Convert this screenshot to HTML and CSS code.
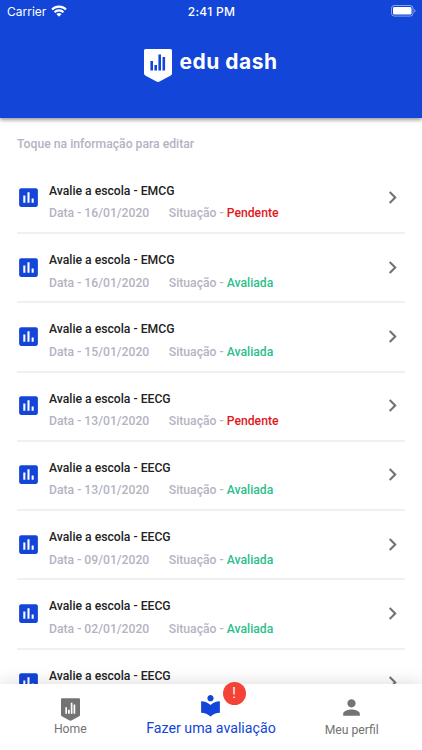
FILE: index.html
```
<!DOCTYPE html>
<html lang="pt-BR">
<head>
  <meta charset="UTF-8" />
  <meta name="viewport" content="width=device-width, initial-scale=1.0"/>
  <title>edu dash</title>
  <link rel="stylesheet" href="styles.css">
</head>
<body>

<header>
  <div class="status-bar">
    <span class="carrier">
      Carrier
      <svg class="wifi" viewBox="0 0 16 12">
        <path d="M1 4.500a10 10 0 0 1 14 0M3.500 7.200a6.400 6.400 0 0 1 9 0" fill="none" stroke="#fff" stroke-width="2.1"/>
        <path d="M5.400 9.100a3.800 3.800 0 0 1 5.200 0L8 11.700z" fill="#fff"/>
      </svg>
    </span>
    <span class="clock">2:41 PM</span>
    <svg class="battery" viewBox="0 0 25 12">
      <rect x=".5" y=".5" width="21.5" height="10.6" rx="2.8" fill="none" stroke="#fff" stroke-opacity=".5"/>
      <rect x="2" y="2" width="18.5" height="7.6" rx="1.4" fill="#fff"/>
      <path d="M23.3 4v3.800q1.200-.7 1.200-1.900T23.300 4z" fill="#fff" fill-opacity=".5"/>
    </svg>
  </div>
  <div class="logo">
    <svg class="logo-icon" viewBox="0 0 28 33">
      <path d="M1.500 0h25q1.500 0 1.500 1.500v23q0 1.200-1.200 1.900L16 32.300q-2 1.200-4 0L1.200 26.400Q0 25.700 0 24.500v-23Q0 0 1.500 0z" fill="#fff"/>
      <path d="M6.400 12H9v9.600H6.400zM10.400 16H13v5.600h-2.600zM14.400 5.500H17v16.100h-2.600zM18.500 8h2.600v13.600h-2.600z" fill="#1245d8"/>
    </svg>
    <span class="logo-text">edu dash</span>
  </div>
</header>

<main>
  <p class="hint">Toque na informação para editar</p>
  <ul id="evaluations">
    <!-- Evaluation rows inserted here -->
  </ul>
</main>

<nav>
  <a class="tab home">
    <svg viewBox="0 0 28 33">
      <path d="M1.500 0h25q1.500 0 1.500 1.500v23q0 1.200-1.200 1.900L16 32.300q-2 1.200-4 0L1.200 26.400Q0 25.700 0 24.500v-23Q0 0 1.500 0z" fill="#737373"/>
      <path d="M6.400 13h2.500v9.600H6.400zM10.400 17h2.500v5.600h-2.500zM14.400 6.500h2.500v16.100h-2.500zM18.500 9H21v13.600h-2.500z" fill="#fff"/>
    </svg>
    <span>Home</span>
  </a>
  <a class="tab active">
    <svg viewBox="0 0 24 24"><path d="M12 11.550C9.640 9.350 6.480 8 3 8v11c3.480 0 6.640 1.350 9 3.550 2.360-2.190 5.520-3.550 9-3.550V8c-3.480 0-6.640 1.350-9 3.550zM12 8c1.660 0 3-1.340 3-3s-1.340-3-3-3-3 1.340-3 3 1.340 3 3 3z"/></svg>
    <span>Fazer uma avaliação</span>
    <b class="badge">!</b>
  </a>
  <a class="tab profile">
    <svg viewBox="0 0 24 24"><path d="M12 12c2.210 0 4-1.790 4-4s-1.790-4-4-4-4 1.790-4 4 1.790 4 4 4zm0 2c-2.670 0-8 1.340-8 4v2h16v-2c0-2.660-5.330-4-8-4z"/></svg>
    <span>Meu perfil</span>
  </a>
</nav>

<script>
  const evaluations = [
    { school: "EMCG", date: "16/01/2020", status: "Pendente" },
    { school: "EMCG", date: "16/01/2020", status: "Avaliada" },
    { school: "EMCG", date: "15/01/2020", status: "Avaliada" },
    { school: "EECG", date: "13/01/2020", status: "Pendente" },
    { school: "EECG", date: "13/01/2020", status: "Avaliada" },
    { school: "EECG", date: "09/01/2020", status: "Avaliada" },
    { school: "EECG", date: "02/01/2020", status: "Avaliada" },
    { school: "EECG", date: "", status: "" }
  ];

  const list = document.getElementById("evaluations");

  evaluations.forEach((item) => {
    const row = document.createElement("li");
    const details = item.date ? `
        <div class="details">
          <span class="date">Data - ${item.date}</span>
          <span>Situação - <b class="${item.status.toLowerCase()}">${item.status}</b></span>
        </div>` : `<div class="details"></div>`;
    row.innerHTML = `
      <svg class="chart" viewBox="0 0 24 24"><path d="M19 3H5c-1.100 0-2 .9-2 2v14c0 1.100.9 2 2 2h14c1.100 0 2-.9 2-2V5c0-1.100-.9-2-2-2zM9 17H7v-7h2v7zm4 0h-2V7h2v10zm4 0h-2v-4h2v4z"/></svg>
      <div class="info">
        <div class="title">Avalie a escola - ${item.school}</div>
        ${details}
      </div>
      <svg class="chevron" viewBox="0 0 24 24"><path d="M10 6L8.590 7.410 13.170 12l-4.580 4.590L10 18l6-6z"/></svg>
    `;
    list.appendChild(row);
  });
</script>

</body>
</html>
```
FILE: styles.css
```
* {
  box-sizing: border-box;
}

body {
  margin: 0;
  height: 750px;
  display: flex;
  flex-direction: column;
  overflow: hidden;
  background: #fff;
  font-family: Roboto, sans-serif;
}

header {
  position: relative;
  z-index: 1;
  flex: none;
  height: 118px;
  background: #1245d8;
  color: #fff;
  box-shadow: 0 2px 4px rgba(0, 0, 0, 0.4);
}

.status-bar {
  display: grid;
  grid-template-columns: 1fr auto 1fr;
  align-items: center;
  height: 22px;
  padding: 0 6px 0 7px;
  font-family: Inter, sans-serif;
  font-size: 12px;
}

.carrier {
  display: flex;
  align-items: center;
  gap: 5px;
}

.wifi {
  width: 16px;
  height: 12px;
}

.clock {
  font-size: 12px;
  font-weight: 500;
  letter-spacing: 0.3px;
}

.battery {
  justify-self: end;
  width: 25px;
  height: 12px;
}

.logo {
  display: flex;
  justify-content: center;
  gap: 7px;
  padding-top: 27px;
}

.logo-icon {
  width: 28px;
  height: 33px;
}

.logo-text {
  font-family: Inter, sans-serif;
  font-size: 21px;
  font-weight: 700;
  line-height: 25px;
  letter-spacing: 0.5px;
}

main {
  flex: 1;
  min-height: 0;
  overflow: hidden;
  padding: 0 17px;
}

.hint {
  margin: 18px 0 12.75px;
  font-size: 12.2px;
  font-weight: 500;
  line-height: 16px;
  color: #b4b3c1;
}

ul {
  margin: 0;
  padding: 0;
  list-style: none;
}

li {
  display: flex;
  align-items: center;
  height: 69.25px;
  border-bottom: 2px solid #f0f0f2;
}

.chart {
  width: 25px;
  height: 25px;
  margin: -1px 0 0 -1px;
  fill: #1245d8;
}

.info {
  flex: 1;
  margin-left: 8px;
  padding-top: 7.5px;
}

.title {
  font-size: 12.2px;
  font-weight: 500;
  line-height: 18px;
  color: #222;
}

.details {
  display: flex;
  gap: 19.5px;
  height: 18px;
  margin-top: 4.5px;
  font-size: 12.2px;
  font-weight: 500;
  line-height: 18px;
  color: #b4b3c1;
}

.details b {
  font-weight: 500;
}

.pendente {
  color: #e3171b;
}

.avaliada {
  color: #2dbe8b;
}

.chevron {
  width: 25px;
  height: 25px;
  margin-top: -1px;
  fill: #737373;
}

nav {
  position: relative;
  flex: none;
  display: grid;
  grid-template-columns: repeat(3, 1fr);
  height: 66px;
  background: #fff;
  box-shadow: 0 -1px 16px rgba(0, 0, 0, 0.14);
}

.tab {
  position: relative;
  display: flex;
  flex-direction: column;
  align-items: center;
  padding-top: 11px;
  font-size: 12.2px;
  line-height: 16px;
  color: #737373;
}

.tab svg {
  width: 25px;
  height: 25px;
  fill: currentColor;
}

.home {
  padding-top: 14px;
}

.home svg {
  width: 19px;
  height: 23px;
}

.active {
  padding-top: 9px;
  font-size: 14.2px;
  line-height: 20px;
  color: #1245d8;
}

.profile span {
  margin-top: 2px;
}

.badge {
  position: absolute;
  top: -2px;
  left: 82px;
  width: 23px;
  height: 23px;
  border-radius: 50%;
  background: #f44336;
  color: #fff;
  font-size: 14px;
  font-weight: 400;
  line-height: 22px;
  text-align: center;
}
```
